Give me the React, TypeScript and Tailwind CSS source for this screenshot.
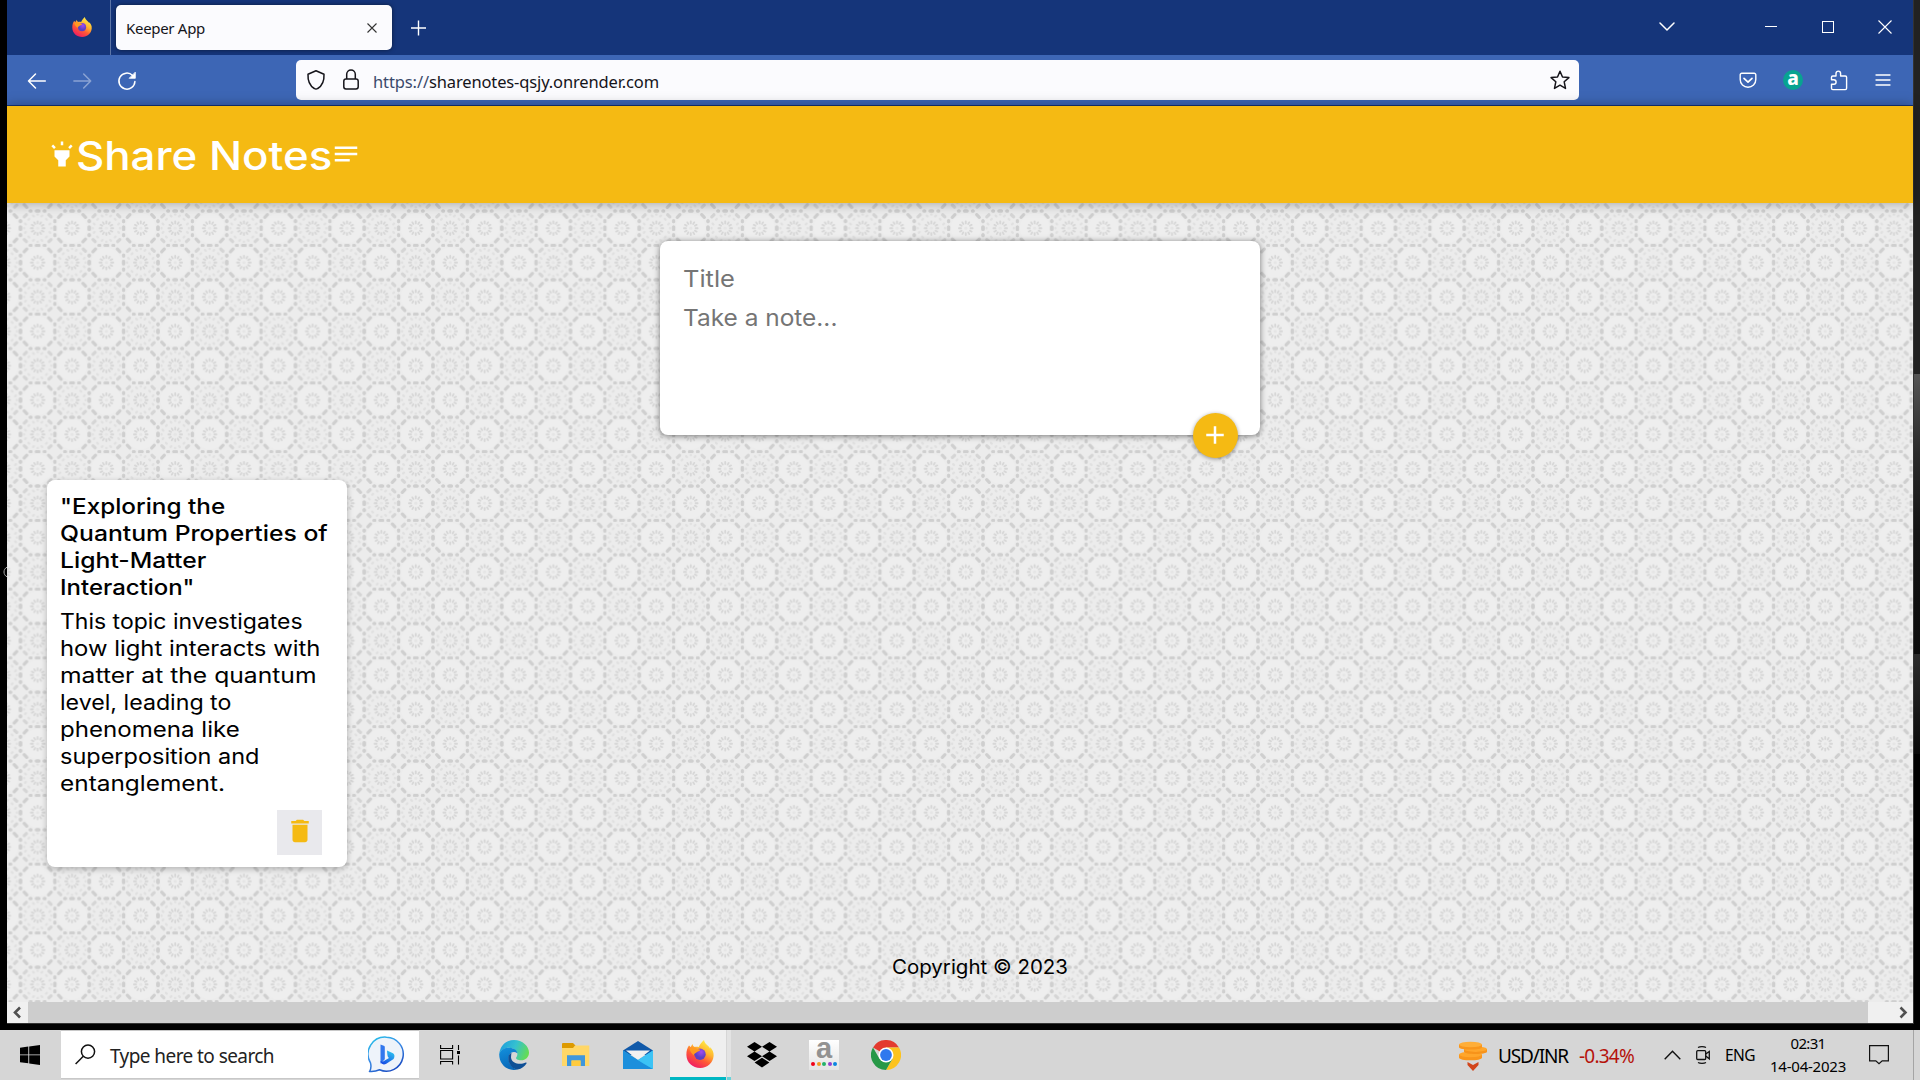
import { useLayoutEffect, useRef, useState } from "react";
import { MdAdd, MdDelete, MdHighlight, MdNotes } from "react-icons/md";

/** Single line of text whose tracking is adjusted so that it spans `width` pixels. */
function Fit({ width, className = "", children }: { width: number; className?: string; children: string }) {
  const ref = useRef<HTMLSpanElement>(null);
  const [spacing, setSpacing] = useState(0);
  useLayoutEffect(() => {
    if (ref.current) {
      const natural = ref.current.getBoundingClientRect().width;
      setSpacing((width - natural) / children.length);
    }
  }, []);
  return (
    <span ref={ref} className={"inline-block whitespace-pre " + className} style={{ letterSpacing: spacing }}>
      {children}
    </span>
  );
}

/** Single line of text set in widened letters so that it spans `width` pixels. */
function Wide({ width, children }: { width: number; children: string }) {
  const ref = useRef<HTMLSpanElement>(null);
  const [scale, setScale] = useState(1);
  useLayoutEffect(() => {
    if (ref.current) setScale(width / ref.current.offsetWidth);
  }, []);
  return (
    <span ref={ref} className="inline-block origin-left whitespace-pre" style={{ transform: `scaleX(${scale})` }}>
      {children}
    </span>
  );
}

const CELL = 34.375;

function Octagon({ x, y, petals }: { x: number; y: number; petals: boolean }) {
  const spokes = Array.from({ length: 12 }, (_, i) => i * 30);
  const quarter = [0, 90, 180, 270];
  return (
    <g transform={`translate(${x + CELL / 2} ${y + CELL / 2})`} strokeLinecap="round" fill="none">
      {!petals && <circle r="15" fill="#eeeeee" />}
      {quarter.map((a) => (
        <g key={a} transform={`rotate(${a})`}>
          <path d="M-1.200-17.2h2.400M-7.300-17.2h.6M6.700-17.2h.6" stroke="#cfcfcf" strokeWidth="3.200" />
          <path d={petals ? "M11.300-13.400l2.100 2.100" : "M10.900-13.500l2.600 2.600"} stroke={petals ? "#d5d5d5" : "#cfcfcf"} strokeWidth="3.200" />
          {petals && (
            <path d="M-4.600-12.600l.8.8M4.600-12.600l-.8.8M-.2-13.600h.4M8.400-9.200l.8.8" stroke="#e0e0e0" strokeWidth="2.200" />
          )}
        </g>
      ))}
      {spokes.map((a) => (
        <path key={a} transform={`rotate(${a})`} d="M0-4.800v-2" stroke="#d6d6d6" strokeWidth="1.800" />
      ))}
      <circle r="1.600" fill="#e5e5e5" />
    </g>
  );
}

function Wallpaper() {
  return (
    <svg className="absolute inset-0 h-full w-full" aria-hidden="true">
      <defs>
        <pattern id="tiles" x="13.5" y="8" width={CELL * 2} height={CELL * 2} patternUnits="userSpaceOnUse">
          <rect width={CELL * 2} height={CELL * 2} fill="#ececec" />
          {[-1, 0, 1, 2].map((r) =>
            [-1, 0, 1, 2].map((c) => (
              <Octagon key={`${r}-${c}`} x={c * CELL} y={r * CELL} petals={(r + c) % 2 === 0} />
            )),
          )}
        </pattern>
      </defs>
      <rect width="100%" height="100%" fill="url(#tiles)" />
    </svg>
  );
}

function Firefox({ size, id }: { size: number; id: string }) {
  return (
    <svg width={size} height={size} viewBox="0 0 28 28">
      <defs>
        <linearGradient id={id + "a"} x1=".8" y1=".05" x2=".25" y2="1">
          <stop offset="0" stopColor="#fff14a" />
          <stop offset=".35" stopColor="#ffb52e" />
          <stop offset=".62" stopColor="#ff5a35" />
          <stop offset="1" stopColor="#ee1568" />
        </linearGradient>
        <radialGradient id={id + "b"} cx=".6" cy=".3">
          <stop offset="0" stopColor="#a34bef" />
          <stop offset="1" stopColor="#5b41c4" />
        </radialGradient>
      </defs>
      <path
        d="M3 5.5c.7.3 1.3 1 1.6 1.7L6.5 4c.2 1.5 1 2.6 2.3 3 1.3-.5 2.9-.4 4 .1C13.700 4.500 15.500 2.500 18 0c.3 2.600 2 4 3.900 5.800 1.200 1 1.800 2 2.200 3 .2-.8.1-1.200 0-1.700 2.200 2.500 3.900 5.400 3.500 9C27 23 21.500 28 14.300 28 6.500 28 .6 22.500.4 15c-.1-4 1-7.500 2.600-9.500z"
        fill={`url(#${id}a)`}
      />
      <circle cx="14" cy="14.200" r="5.700" fill={`url(#${id}b)`} />
      <path d="M3.500 8.500c2.500-1.300 5.500-1.200 7 0 1.500.8 3.500.7 3.600 1.500 0 1-2.800 1.400-3.500 2.200-.9 1.300-3 1-2.600 3.200C5.500 14 4 11 3.500 8.500z" fill="#ff9a20" />
    </svg>
  );
}

function TabBar() {
  return (
    <div className="flex h-[55px] items-start bg-[#15357a] text-white">
      <div className="flex h-[55px] w-[104px] justify-end border-r border-[#5d75a6] pt-[17px] pr-[18px]">
        <Firefox size={20} id="fxs" />
      </div>
      <div className="mt-[5px] ml-[5px] flex h-[45px] w-[276px] items-center rounded-[5px] bg-[#fbfbfe] pl-[10px] text-[#15141a] shadow-[0_0_4px_rgba(0,0,0,0.5)]">
        <Fit width={79} className="text-[15px] leading-6">Keeper App</Fit>
        <svg className="ml-auto mr-[14px]" width="12" height="12" viewBox="0 0 12 12" stroke="#333" strokeWidth="1.100">
          <path d="M1.500 1.500l9 9M10.500 1.500l-9 9" />
        </svg>
      </div>
      <svg className="mt-[20px] ml-[19px]" width="16" height="16" viewBox="0 0 16 16" stroke="#fff" strokeWidth="1.400">
        <path d="M7.500 0.500v15M0 8h15" />
      </svg>
      <div className="mr-[21px] ml-auto flex h-[55px] items-start">
        <svg className="mt-[22px] mr-[90px]" width="16" height="10" viewBox="0 0 16 10" fill="none" stroke="#fff" strokeWidth="1.500" strokeLinecap="round">
          <path d="M1 1l7 7 7-7" />
        </svg>
        <div className="mt-[26px] mr-[45px] h-px w-3 bg-white" />
        <div className="mt-[21px] mr-[44px] h-3 w-3 border border-white" />
        <svg className="mt-[20px]" width="14" height="14" viewBox="0 0 14 14" stroke="#fff" strokeWidth="1.100">
          <path d="M.5.5l13 13M13.500.5l-13 13" />
        </svg>
      </div>
    </div>
  );
}

function Toolbar() {
  return (
    <div className="flex h-[51px] items-start border-b border-[#15357a] bg-[#3d66b5]">
      <svg className="mt-[17px] ml-[20px]" width="20" height="18" viewBox="0 0 20 18" fill="none" stroke="#fff" strokeWidth="1.500" strokeLinecap="round" strokeLinejoin="round">
        <path d="M18.300 9H1.500M8.500 2l-7 7 7 7" />
      </svg>
      <svg className="mt-[17px] ml-[26px]" width="20" height="18" viewBox="0 0 20 18" fill="none" stroke="#8ba3d3" strokeWidth="1.500" strokeLinecap="round" strokeLinejoin="round">
        <path d="M.9 9h16.800M10.700 2l7 7-7 7" />
      </svg>
      <svg className="mt-[16px] ml-[24px]" width="20" height="20" viewBox="0 0 20 20" fill="none" stroke="#fff" strokeWidth="1.500" strokeLinecap="round">
        <path d="M17.900 10.500a8 8 0 1 1-2.300-6" />
        <path d="M18.300 1.500v5.800h-5.800z" fill="#fff" strokeWidth=".8" strokeLinejoin="round" />
      </svg>
      <div className="mt-[5px] ml-[159px] flex h-10 w-[1283px] items-center rounded-[5px] bg-[#fbfbfe] text-[#15141a]">
        <svg className="ml-[10px]" width="20" height="22" viewBox="0 0 20 22" fill="none" stroke="#15141a" strokeWidth="1.500" strokeLinejoin="round">
          <path d="M10 1.800l8 3.400c.3 6-1 11-6.300 14.300-.9.600-2.500.6-3.400 0C3 16.200 1.700 11.200 2 5.200z" />
        </svg>
        <svg className="ml-[17px]" width="16" height="22" viewBox="0 0 16 22" fill="none" stroke="#15141a" strokeWidth="1.500">
          <rect x=".8" y="10" width="14.400" height="10" rx="2.200" />
          <path d="M3.700 10V5.300a4.300 4.300 0 0 1 8.600 0V10" />
        </svg>
        <span className="mt-[4px] ml-[14px] flex text-[16.5px] leading-6">
          <Fit width={56} className="text-[#3b4a6b]">https://</Fit>
          <Fit width={230}>sharenotes-qsjy.onrender.com</Fit>
        </span>
        <svg className="mr-[9px] ml-auto" width="20" height="20" viewBox="0 0 20 20" fill="none" stroke="#15141a" strokeWidth="1.500" strokeLinejoin="round">
          <path d="M10 1.300l2.500 5.700 6.400.6-4.700 4.200 1.300 6.600L10 15.200l-5.500 3.200 1.300-6.600L1.100 7.600l6.400-.6z" />
        </svg>
      </div>
      <div className="mr-[22px] ml-auto flex h-[50px] items-center">
        <svg width="18" height="17" viewBox="0 0 18 17" fill="none" stroke="#fff" strokeWidth="1.400" strokeLinecap="round" strokeLinejoin="round">
          <path d="M2.800 1.200h12.400a1.600 1.600 0 0 1 1.600 1.600v4.700a7.800 7.800 0 0 1-15.600 0V2.800a1.600 1.600 0 0 1 1.600-1.600z" />
          <path d="M5 6.400l4 3.800 4-3.800" strokeWidth="1.700" />
        </svg>
        <div className="ml-[26px] flex h-5 w-5 items-center justify-center rounded-full bg-[#08a391] pb-[4px] text-[19px] leading-5 font-extrabold text-white">a</div>
        <svg className="ml-[27px]" width="18" height="21" viewBox="0 0 18 21" fill="none" stroke="#fff" strokeWidth="1.400" strokeLinejoin="round">
          <path d="M1.500 8.500V7.300a1.300 1.300 0 0 1 1.300-1.300H6V3.400a2.300 2.300 0 0 1 4.600 0V6h4.700a1.300 1.300 0 0 1 1.300 1.300v11a1.300 1.300 0 0 1-1.300 1.300H2.800a1.300 1.300 0 0 1-1.300-1.300V14.300h2.300a2 2 0 0 0 0-4.600H1.500z" />
        </svg>
        <svg className="ml-[27px]" width="16" height="14" viewBox="0 0 16 14" stroke="#fff" strokeWidth="1.300" strokeLinecap="round">
          <path d="M1 2h14M1 7h14M1 12h14" />
        </svg>
      </div>
    </div>
  );
}

const titleLines: [string, number][] = [
  ['"Exploring the', 165],
  ["Quantum Properties of", 268],
  ["Light-Matter", 146],
  ['Interaction"', 135],
];
const bodyLines: [string, number][] = [
  ["This topic investigates", 243],
  ["how light interacts with", 260],
  ["matter at the quantum", 256],
  ["level, leading to", 171],
  ["phenomena like", 180],
  ["superposition and", 199],
  ["entanglement.", 165],
];

function Page() {
  return (
    <div className="flex h-[896px] flex-col font-['Inter',sans-serif]">
      <header className="relative z-10 flex h-[97px] items-start bg-[#f5ba13] pl-[40px] text-white shadow-[0_0_12px_rgba(0,0,0,0.35)]">
        <MdHighlight className="mt-[33px] shrink-0" size={30} />
        <h1 className="mt-[25px] -ml-px w-[255px] text-[39.5px] leading-[50px] font-medium">
          <Wide width={256}>Share Notes</Wide>
        </h1>
        <MdNotes className="mt-[33px] shrink-0" size={30} />
      </header>
      <main className="relative flex flex-1 flex-col overflow-hidden">
        <Wallpaper />
        <div className="relative mt-[38px] ml-[653px] h-[194px] w-[600px] shrink-0 rounded-[8px] bg-white pt-[20px] pl-[23px] text-[23px] text-[#757575] shadow-[0_1px_6px_rgba(0,0,0,0.5)]">
          <div className="h-[39px] leading-[36px]">
            <Wide width={52}>Title</Wide>
          </div>
          <div className="leading-[36px]">
            <Wide width={154}>Take a note...</Wide>
          </div>
          <div className="absolute top-[172px] left-[533px] flex h-[45px] w-[45px] items-center justify-center rounded-full bg-[#f5ba13] pr-px pb-px text-white shadow-[0_1px_4px_rgba(0,0,0,0.4)]">
            <MdAdd size={30} />
          </div>
        </div>
        <div className="relative mt-[45px] ml-[40px] flex h-[387px] w-[300px] shrink-0 flex-col rounded-[8px] bg-white pt-[13px] pl-[12.5px] text-black shadow-[0_2px_6px_rgba(0,0,0,0.25)]">
          <div className="flex h-[115px] flex-col text-[21.5px] leading-[27px] font-medium">
            {titleLines.map(([t, w]) => (
              <div key={t} className="h-[27px]">
                <Wide width={w}>{t}</Wide>
              </div>
            ))}
          </div>
          <div className="flex flex-col text-[21px] leading-[27px]">
            {bodyLines.map(([t, w]) => (
              <div key={t} className="h-[27px]">
                <Wide width={w}>{t}</Wide>
              </div>
            ))}
          </div>
          <div className="mt-auto mr-[25px] mb-[12px] ml-auto flex h-[45px] w-[45px] items-center justify-center bg-[#e9e9ed] pb-[3px] text-[#f5ba13]">
            <MdDelete size={30} />
          </div>
        </div>
        <footer className="relative mt-[84px] ml-[885px] text-[20px] leading-[32px] text-black">
          <Wide width={176}>Copyright © 2023</Wide>
        </footer>
      </main>
    </div>
  );
}

function ScrollBar() {
  return (
    <div className="flex h-[21px] items-center bg-[#f0f0f0]">
      <svg className="w-[21px]" width="21" height="21" viewBox="0 0 21 21" fill="none" stroke="#505050" strokeWidth="2.600">
        <path d="M13 5.500l-5 5 5 5" />
      </svg>
      <div className="h-[21px] w-[1840px] bg-[#cdcdcd]" />
      <svg className="ml-auto" width="21" height="21" viewBox="0 0 21 21" fill="none" stroke="#505050" strokeWidth="2.600">
        <path d="M8.500 5.500l5 5-5 5" />
      </svg>
    </div>
  );
}

function TaskBar() {
  return (
    <div className="flex h-[50px] items-start bg-[#d6d6d6] text-black">
      <svg className="mt-[15px] ml-[20px]" width="20" height="20" viewBox="0 0 20 20">
        <path d="M0 2.800L8.300 1.600V9.400H0zM9.200 1.500L20 0v9.400H9.200zM0 10.300h8.300v8L0 17.200zM9.200 10.300H20V20L9.200 18.500z" />
      </svg>
      <div className="ml-[21px] flex h-[49px] w-[358px] items-center border-y border-[#c8c8c8] bg-white">
        <svg className="ml-[14px]" width="21" height="21" viewBox="0 0 21 21" fill="none" stroke="#111" strokeWidth="1.500">
          <circle cx="13" cy="7.600" r="6.600" />
          <path d="M8.300 12.300L.6 20" />
        </svg>
        <Fit width={164} className="ml-[14px] mt-[2px] text-[19px] leading-7 text-[#222]">Type here to search</Fit>
        <svg className="ml-auto mr-[14px]" width="37" height="37" viewBox="0 0 37 37">
          <defs>
            <linearGradient id="bingRing" x1="0" y1="0" x2=".6" y2="1">
              <stop offset="0" stopColor="#22c6e8" />
              <stop offset=".5" stopColor="#3b8fe8" />
              <stop offset="1" stopColor="#1b4fc4" />
            </linearGradient>
            <linearGradient id="bingB" x1=".8" y1="0" x2=".2" y2="1">
              <stop offset="0" stopColor="#2ec5f0" />
              <stop offset="1" stopColor="#174ae4" />
            </linearGradient>
          </defs>
          <path d="M18.500 1.200a17 17 0 1 1-7 32.600c-3 1.400-6.500 1.800-9.800 1.600 1.500-2.800 1.700-5 .8-8.500A17 17 0 0 1 18.500 1.200z" fill="#eef3fa" stroke="url(#bingRing)" strokeWidth="1.500" />
          <path d="M12.500 8.500l3.300 1.300c.8.300 1 .8 1 1.500v12l-4.300 4.500z" fill="#3277ee" />
          <path d="M19 14.500l6 2.800c1.700 1 2 3.700.6 5.700l-7.300 4.700c-2.800 1.600-5.800.3-5.800-2.600l2.500.5 6-3.600c-1.800-.9-1.600-3.600-2-7.500z" fill="url(#bingB)" />
        </svg>
      </div>
      <svg className="mt-[15px] ml-[21px]" width="20" height="20" viewBox="0 0 20 20" fill="none" stroke="#000" strokeWidth="1.100">
        <path d="M.6 0v3.500h12V0M.6 19.500v-3h12v3M.6 5.500h12v8.500h-12zM18.500 0v5M18.500 10.500v9" />
        <rect x="17" y="6" width="3" height="3" fill="#000" stroke="none" />
      </svg>
      <svg className="mt-[10px] ml-[39px]" width="30" height="30" viewBox="0 0 30 30">
        <defs>
          <linearGradient id="edgeTop" x1="0" y1=".3" x2="1" y2=".6">
            <stop offset="0" stopColor="#1f9fdc" />
            <stop offset=".5" stopColor="#35c1d0" />
            <stop offset="1" stopColor="#66dd50" />
          </linearGradient>
          <linearGradient id="edgeLow" x1=".1" y1="0" x2=".4" y2="1">
            <stop offset="0" stopColor="#1390dc" />
            <stop offset="1" stopColor="#0867b8" />
          </linearGradient>
        </defs>
        <path d="M.3 14C1 5.500 7.500 0 15 0c8.500 0 15 6.200 15 12.500 0 4.700-3.500 7.800-7.800 7.800-3.800 0-5.200-1.400-5.200-2.200s1.400-1.500 1.400-4C18.400 11 15 7.700 10 7.700 5.500 7.700 2 10 .3 14z" fill="url(#edgeTop)" />
        <path d="M.2 14C2 9.500 5.500 7.700 10 7.700c4.500 0 8 2.300 8.400 5.500-5-3.200-9 .8-8.800 5.600.2 5.500 4 9.700 9.200 10.700C9 32 0 25 .2 14z" fill="url(#edgeLow)" />
        <path d="M12.500 12.700c-3 1.500-3.700 4.700-2.900 8 1 4.800 4.700 8.500 9.200 8.800 3.700-.8 7-3.300 8.800-6.300.3-.6-.3-1-.8-.7-6 3-14 .7-14.700-4.500-.2-2 .2-3.700.4-5.300z" fill="#0e4f96" />
      </svg>
      <svg className="mt-[13px] ml-[33px]" width="28" height="24" viewBox="0 0 28 24">
        <path d="M0 1a1 1 0 0 1 1-1h10l2.500 2.500L12 6H0z" fill="#dd9a00" />
        <path d="M0 5h11l2-2.500h14.300V23H0z" fill="#ffd767" />
        <path d="M5 12.300h18V23h-4.500v-5.500h-9V23H5z" fill="#3f97dc" />
        <path d="M9.500 17.500h9V23h-9z" fill="#ffcb3f" />
      </svg>
      <svg className="mt-[11px] ml-[33px]" width="30" height="29" viewBox="0 0 30 29">
        <path d="M0 9.500L15 0l15 9.500V14H0z" fill="#1059a9" />
        <path d="M3 9.500h24L15 19z" fill="#f1f1f1" />
        <path d="M0 9.500l15 9.500L30 9.500V28H0z" fill="#2fb4ee" />
        <path d="M0 9.500L21 23l9 5H0z" fill="#1c8fdc" />
        <path d="M15 19L30 9.500V28z" fill="#3cc3f5" />
      </svg>
      <div className="ml-[17px] flex h-[50px] w-[56px] items-start justify-center border-b-[3px] border-[#00b7c3] bg-[#efefef] pt-[10px] pl-1">
        <Firefox size={28} id="fxb" />
      </div>
      <div className="ml-px h-[50px] w-1 border-b-[3px] border-[#68d3da] bg-[#e3e3e3]" />
      <svg className="mt-[12px] ml-[16px]" width="30" height="26" viewBox="0 0 30 26">
        <path d="M7.500 0L15 4.800 7.500 9.600 0 4.800zM22.500 0L30 4.800l-7.500 4.800L15 4.800zM0 14.200l7.500-4.600L15 14.200l-7.500 4.700zM22.500 9.600l7.500 4.600-7.500 4.700-7.500-4.700zM7.600 20.500l7.400-4.700 7.400 4.700-7.400 4.900z" />
      </svg>
      <div className="mt-[10px] ml-[32px] flex h-[30px] w-[30px] flex-col items-center bg-linear-to-b from-white to-[#e4e4e4]">
        <div className="h-[22px] font-['Liberation_Sans'] text-[29px] leading-[17px] font-bold text-[#929292]">a</div>
        <div className="flex gap-[1.5px]">
          <i className="h-1 w-1 rounded-full bg-[#f00018]" />
          <i className="h-1 w-1 rounded-full bg-[#f29b22]" />
          <i className="h-1 w-1 rounded-full bg-[#25b26a]" />
          <i className="h-1 w-1 rounded-full bg-[#9440d0]" />
          <i className="h-1 w-1 rounded-full bg-[#0b86e0]" />
        </div>
      </div>
      <svg className="mt-[10px] ml-[32px]" width="30" height="30" viewBox="0 0 30 30">
        <path d="M15 15L2 7.500A15 15 0 0 1 28 7.500H15z" fill="#e33b2e" />
        <path d="M15 7.500h13A15 15 0 0 1 15 30l6.500-11.200z" fill="#fcc31e" />
        <path d="M2 7.500A15 15 0 0 0 15 30l6.500-11.200L15 15 8.500 18.700z" fill="#279847" />
        <circle cx="15" cy="15" r="7.500" fill="#fff" />
        <circle cx="15" cy="15" r="5.900" fill="#2f78ee" />
      </svg>
      <div className="mr-[6px] ml-auto flex h-[50px] items-start">
        <svg className="mt-[11px]" width="29" height="30" viewBox="0 0 29 30">
          <path d="M0 13.500v3.200c0 3.400 23 3.400 23 0v-3.200z" fill="#f9961c" />
          <ellipse cx="11.500" cy="13.500" rx="11.500" ry="2.800" fill="#ffa62b" />
          <path d="M5 8v2.800c0 3 23 3 23 0V8z" fill="#f7931a" />
          <ellipse cx="16.500" cy="8.200" rx="11.500" ry="2.700" fill="#ffa62b" />
          <path d="M0 3.500v2.700c0 3.200 23 3.200 23 0V3.500z" fill="#f9961c" />
          <ellipse cx="11.500" cy="3.500" rx="11.500" ry="2.800" fill="#ffae38" />
          <path d="M8.500 21l5.500 3 5.500-3V24L14 30l-5.500-6z" fill="#d2451b" />
        </svg>
        <Fit width={70} className="mt-[12px] ml-[10px] text-[19px] leading-7">USD/INR</Fit>
        <Fit width={55} className="mt-[12px] ml-[11px] text-[19px] leading-7 text-[#b5120b]">-0.34%</Fit>
        <svg className="mt-[20px] ml-[30px]" width="17" height="10" viewBox="0 0 17 10" fill="none" stroke="#111" strokeWidth="1.400">
          <path d="M.7 9.200l7.800-7.900 7.800 7.900" />
        </svg>
        <svg className="mt-[16px] ml-[14px]" width="16" height="18" viewBox="0 0 16 18" fill="none" stroke="#111" strokeWidth="1.300">
          <rect x="1.700" y="4.700" width="9" height="8.800" rx="1" />
          <path d="M10.700 8l3.600-2.600v7.400L10.700 10M3 1.500C5 .4 9 .4 11 1.500M3 16.500c2 1.100 6 1.100 8 0" />
        </svg>
        <Fit width={30} className="mt-[11px] ml-[14px] text-[15.5px] leading-7">ENG</Fit>
        <div className="mt-[2px] ml-[15px] flex w-[76px] flex-col items-center text-[15px] leading-[23px]">
          <Fit width={35}>02:31</Fit>
          <Fit width={76}>14-04-2023</Fit>
        </div>
        <svg className="mt-[15px] ml-[23px]" width="20" height="20" viewBox="0 0 20 20" fill="none" stroke="#111" strokeWidth="1.200">
          <path d="M.6.6h18.800v15.200h-6.200L10 18.800l-3.200-3H.6z" />
        </svg>
        <div className="ml-[24px] h-[50px] w-px bg-[#a5a5a5]" />
      </div>
    </div>
  );
}

export default function App() {
  return (
    <div className="flex h-[1080px] w-[1920px] flex-col overflow-hidden bg-black font-['Noto_Sans',sans-serif]">
      <div className="flex h-[1030px]">
        <div className="flex w-[7px] justify-end pt-[566px]">
          <svg width="4" height="12" viewBox="0 0 4 12" fill="none" stroke="#aaa">
            <path d="M4 1.200C0 3 0 9 4 10.800" />
          </svg>
        </div>
        <div className="h-[1024px] w-[1906px] shrink-0 border-b border-[#333]">
          <TabBar />
          <Toolbar />
          <Page />
          <ScrollBar />
        </div>
        <div className="h-[1024px] w-[7px] border-l border-[#333]">
          <div className="h-[374px] bg-[#222]" />
          <div className="h-[160px] bg-linear-to-b from-[#555] via-[#2a2a2a] to-[#141414]" />
          <div className="h-[120px] bg-linear-to-b from-[#141414] to-[#0c0c0c]" />
          <div className="h-[100px] bg-linear-to-b from-[#2c2c2c] to-[#0a0a0a]" />
        </div>
      </div>
      <TaskBar />
    </div>
  );
}
